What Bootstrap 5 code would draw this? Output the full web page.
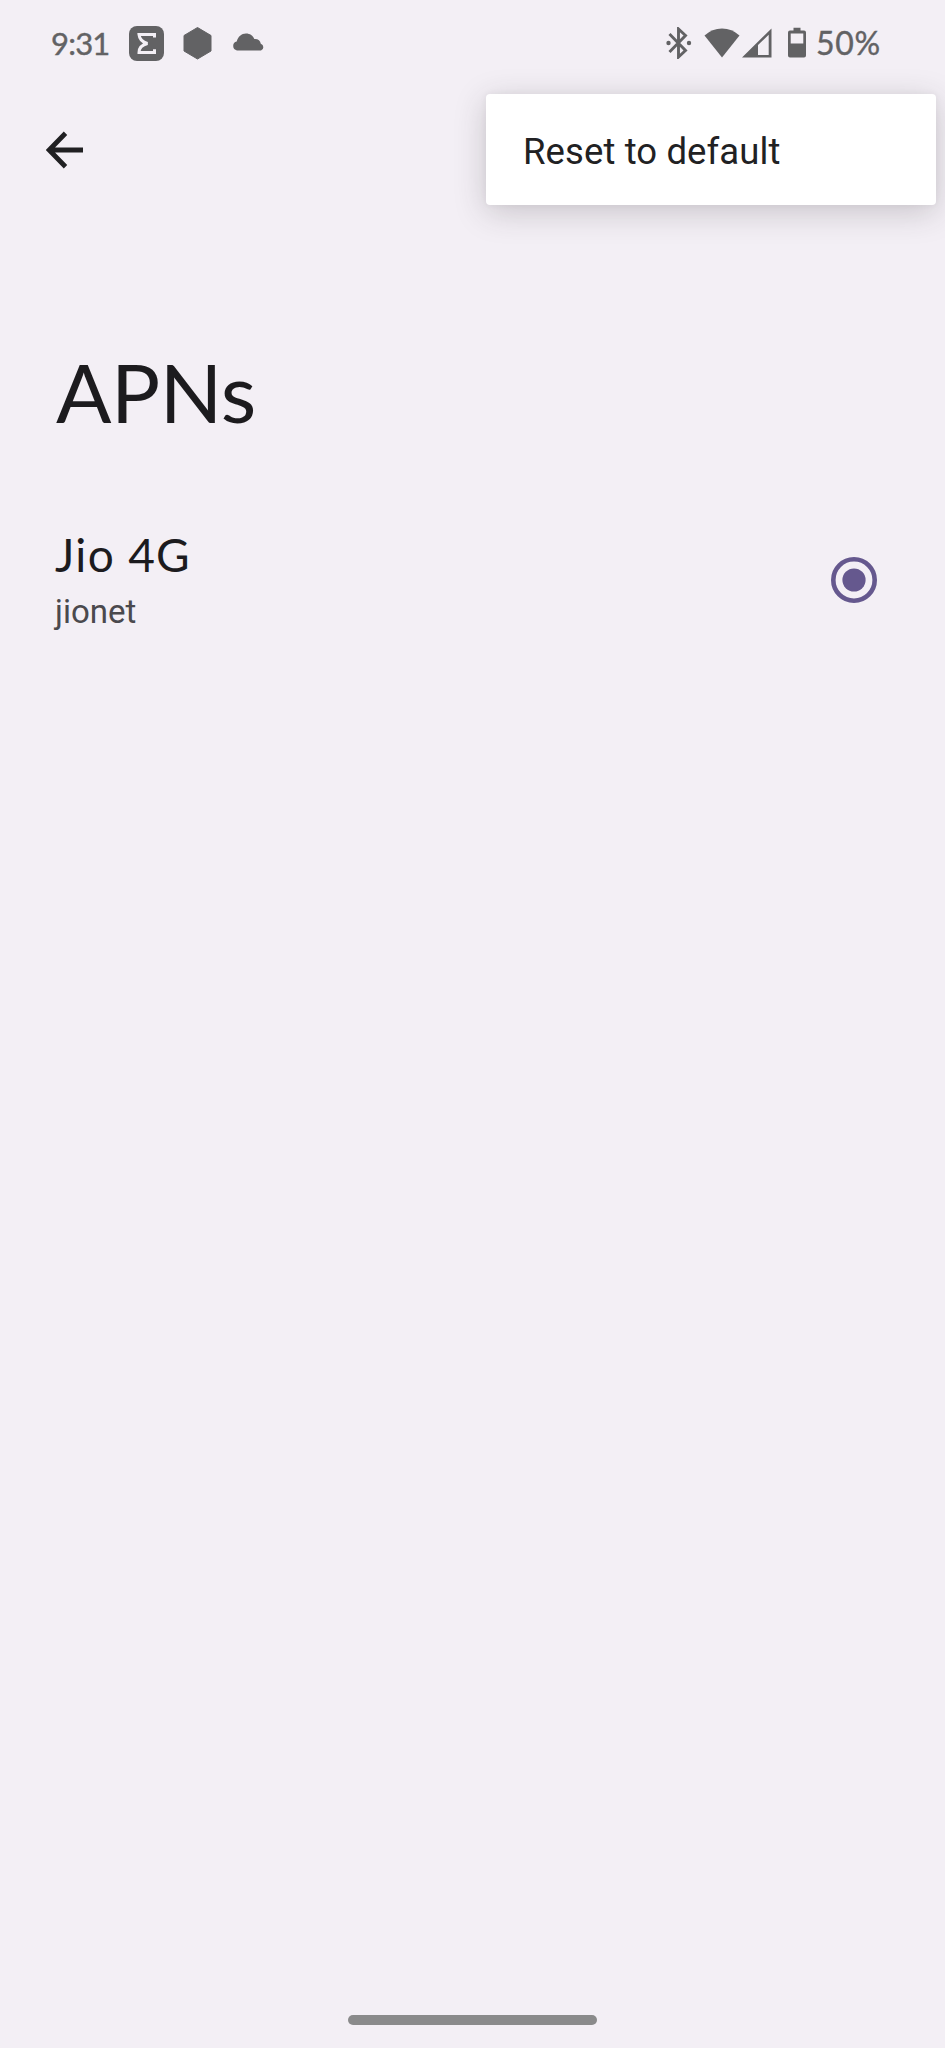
<!DOCTYPE html>
<html lang="en">
<head>
<meta charset="utf-8">
<meta name="viewport" content="width=device-width, initial-scale=1">
<title>APNs</title>
<link href="https://cdn.jsdelivr.net/npm/bootstrap@5.3.0/dist/css/bootstrap.min.css" rel="stylesheet">
<style>
body{background:#f3eff5;color:#1c1b1e;font-family:Lato,"Liberation Sans",sans-serif;min-height:2048px}
svg{display:block;flex:none}
.status{height:86px;padding:0 64px 0 51px;color:#626264;font-size:31px;line-height:38px}
.status span{-webkit-text-stroke:.4px currentColor}
.clock{width:78px;letter-spacing:-.8px}
.level{width:65px;font-size:32px;letter-spacing:.7px}
.hexagon{margin-left:17px}
.cloud{margin-left:18px}
.wifi{margin-left:12px}
.signal{margin-left:2px}
.battery{margin:0 10px 0 16px}
.appbar{height:128px;padding-left:46px}
.back{color:#202022;background:none}
.reset-menu{top:94px;left:486px;width:450px;height:111px;border:0;border-radius:4px;padding:4px 38px 0 37px;box-shadow:0 7px 32px rgba(50,45,50,.22),0 0 6px rgba(50,45,50,.06)}
.reset-menu .dropdown-item{font:400 36.5px/44px Roboto,sans-serif;color:#212123;letter-spacing:.1px}
.title{font-size:82px;line-height:98px;margin:128px 0 0 56px;letter-spacing:-.5px}
.apn{margin-top:88px;padding:0 68px 0 55px}
.apn-name{font-size:46px;line-height:54px;letter-spacing:1.3px}
.apn-id{font:400 33px/40px Roboto,sans-serif;color:#4a494d;margin-top:10px}
.radio{color:#65588e}
.handle{width:249px;height:10px;background:#8a8a8b;margin-bottom:23px}
</style>
</head>
<body class="d-flex flex-column position-relative">
<header class="status d-flex align-items-center justify-content-between">
  <div class="d-flex align-items-center">
    <span class="clock">9:31</span>
    <svg width="35" height="35" viewBox="0 0 35 35"><rect width="35" height="35" rx="8" fill="currentColor"/><path d="M25.500 11.500V8.500H10c.5 5 3.500 7.700 8.500 9-5 1.200-8.500 4-8.500 9h15.500v-3.200" fill="none" stroke="#f3eff5" stroke-width="3"/></svg>
    <svg class="hexagon" width="33" height="35" viewBox="0 0 33 35"><path d="M16.500 1.500 30 9.500v15.500l-13.500 8L3 25V9.500Z" fill="currentColor" stroke="currentColor" stroke-linejoin="round"/></svg>
    <svg class="cloud" width="33" height="35" viewBox="0 0 33 35"><path d="M5 24.500a4.600 4.600 0 0 1-.3-9C6 10.500 9.500 7.500 14 7.500c4 0 7 2.200 8.300 5.500 3.500-.4 6 1.600 6.500 4.700A3.600 3.600 0 0 1 29 24.500Z" fill="currentColor"/></svg>
  </div>
  <div class="d-flex align-items-center">
    <svg width="26" height="32" viewBox="0 0 26 32"><path d="m3.500 7 16 16.500-7 6.500V2l7 6.500-16 16.500" fill="none" stroke="currentColor" stroke-width="2.900"/><circle cx="2.500" cy="16" r="2.200" fill="currentColor"/><circle cx="23" cy="16" r="2.200" fill="currentColor"/></svg>
    <svg class="wifi" width="36" height="32" viewBox="0 0 36 32"><path d="M18 30.500.5 8.500Q8 1.500 18 1.500t17.500 7Z" fill="currentColor"/></svg>
    <svg class="signal" width="30" height="32" viewBox="0 0 30 32"><path fill-rule="evenodd" d="M0 30.500 29.500 1.500v29ZM16 18v10h10.700V7.700Z" fill="currentColor"/></svg>
    <svg class="battery" width="18" height="32" viewBox="0 0 18 32"><path fill-rule="evenodd" d="M5.500 3.500V.8h7v2.700H16a2 2 0 0 1 2 2v23a2 2 0 0 1-2 2H2a2 2 0 0 1-2-2v-23a2 2 0 0 1 2-2ZM2.700 6.500v10h12.600v-10Z" fill="currentColor"/></svg>
    <span class="level text-nowrap">50%</span>
  </div>
</header>
<nav class="appbar d-flex align-items-center">
  <button class="back btn border-0 p-0" type="button" aria-label="Back"><svg width="38" height="38" viewBox="0 0 38 38"><path d="M37 19H4M19.500 2.300 3.200 19l16.300 16.700" fill="none" stroke="currentColor" stroke-width="4.800"/></svg></button>
</nav>
<div class="reset-menu dropdown-menu d-flex align-items-center position-absolute"><a class="dropdown-item p-0" href="#">Reset to default</a></div>
<main>
  <h1 class="title fw-normal mb-0">APNs</h1>
  <div class="apn d-flex align-items-center justify-content-between">
    <div><div class="apn-name">Jio 4G</div><div class="apn-id">jionet</div></div>
    <svg class="radio" width="46" height="46" viewBox="0 0 46 46"><circle cx="23" cy="23" r="20.700" fill="none" stroke="currentColor" stroke-width="4.600"/><circle cx="23" cy="23" r="11.600" fill="currentColor"/></svg>
  </div>
</main>
<div class="handle rounded-pill mt-auto mx-auto"></div>
</body>
</html>
